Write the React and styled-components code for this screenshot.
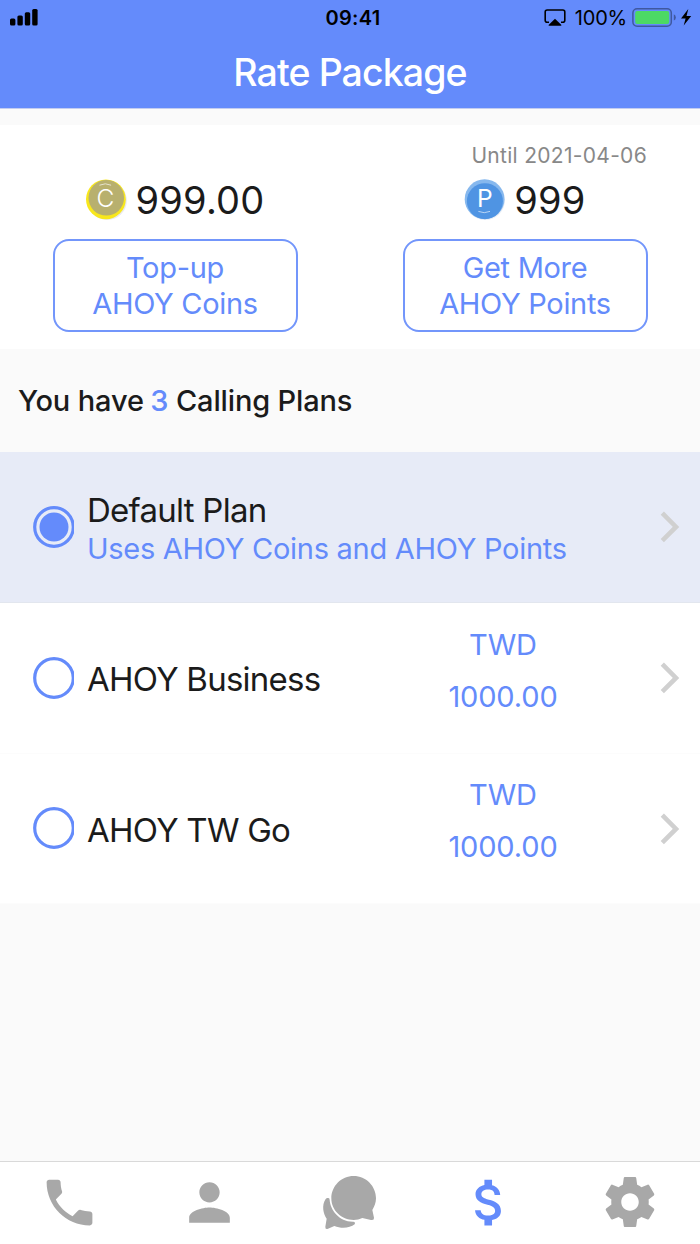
import styled, { createGlobalStyle } from 'styled-components';
import { useState } from 'react';
import { MdPhone, MdPerson, MdAttachMoney } from 'react-icons/md';

const BLUE = '#648bfb';

const GlobalStyle = createGlobalStyle`
  * {
    box-sizing: border-box;
  }
  body {
    margin: 0;
    background: #fafafa;
    color: #1b1b1b;
    font-family: Inter, "Liberation Sans", sans-serif;
  }
  button {
    font-family: inherit;
    margin: 0;
    padding: 0;
    border: 0;
    background: none;
    cursor: pointer;
  }
  svg {
    display: block;
    flex: none;
  }
`;

const Screen = styled.div`
  display: flex;
  flex-direction: column;
  width: 700px;
  height: 1244px;
`;

const Header = styled.header`
  height: 109px;
  background: ${BLUE};
  border-bottom: 1px solid #c3cdf0;
  flex: none;
`;

const StatusBar = styled.div`
  display: grid;
  grid-template-columns: 1fr auto 1fr;
  align-items: center;
  height: 36px;
  padding: 0 8px 0 10px;
  color: #000;
  font-size: 20px;
`;

const Clock = styled.div`
  font-weight: 600;
  letter-spacing: 0.3px;
  padding-left: 4px;
`;

const StatusRight = styled.div`
  display: flex;
  align-items: center;
  justify-content: flex-end;
`;

const Percent = styled.span`
  margin: 0 5px 0 9px;
  letter-spacing: -0.2px;
`;

const Title = styled.h1`
  margin: 0;
  text-align: center;
  color: #fff;
  font-size: 37.5px;
  font-weight: 500;
  line-height: 74px;
  letter-spacing: -0.9px;
`;

const Balances = styled.section`
  display: grid;
  grid-template-columns: 1fr 1fr;
  height: 224px;
  margin-top: 16px;
  padding-top: 18px;
  background: #fff;
  flex: none;
`;

const Balance = styled.div`
  display: flex;
  flex-direction: column;
  align-items: center;
`;

const Until = styled.div`
  align-self: flex-end;
  height: 26px;
  margin-right: 53px;
  color: #888;
  font-size: 21px;
  line-height: 26px;
  letter-spacing: 0.3px;
`;

const Amount = styled.div`
  display: flex;
  align-items: center;
  height: 61px;
  gap: 8px;
  font-size: 38px;
  letter-spacing: 0.2px;
`;

const OutlineButton = styled.button`
  width: 245px;
  height: 93px;
  margin-top: 9px;
  padding-top: 1px;
  border: 2px solid #7396fb;
  border-radius: 16px;
  color: ${BLUE};
  font-size: 29px;
  line-height: 36px;
  letter-spacing: -0.3px;
`;

const PlansHeading = styled.h2`
  margin: 0;
  padding-left: 18px;
  height: 103px;
  font-size: 29px;
  font-weight: 500;
  line-height: 104px;
  letter-spacing: -0.15px;
  flex: none;
  span {
    color: ${BLUE};
    margin-left: -1px;
  }
`;

const Plan = styled.div`
  display: flex;
  align-items: center;
  height: 150.8px;
  padding: 0 1px 0 33px;
  border-bottom: 1px solid ${({ $active }) => ($active ? '#e2e6ee' : '#fcfcfc')};
  background: ${({ $active }) => ($active ? '#e7ebf7' : '#fff')};
  cursor: pointer;
  flex: none;
`;

const PlanText = styled.div`
  flex: 1;
  margin-left: 13px;
  padding-top: 3px;
  white-space: nowrap;
`;

const PlanName = styled.div`
  font-size: 33px;
  line-height: 38px;
  letter-spacing: -0.75px;
`;

const PlanNote = styled.div`
  padding-top: 1px;
  margin-bottom: -3px;
  color: ${BLUE};
  font-size: 29px;
  line-height: 38px;
  letter-spacing: -0.28px;
`;

const Price = styled.div`
  width: 200px;
  margin-right: 37px;
  padding-bottom: 14px;
  text-align: center;
  color: ${BLUE};
  font-size: 29px;
  line-height: 52px;
  letter-spacing: -0.15px;
`;

const TabBar = styled.nav`
  display: grid;
  grid-template-columns: repeat(5, 1fr);
  height: 83px;
  margin-top: auto;
  border-top: 1px solid #d9d9d9;
  background: #fff;
`;

const Tab = styled.button`
  display: flex;
  align-items: center;
  justify-content: center;
  padding: 0 1px 2px 0;
  color: ${({ $active }) => ($active ? BLUE : '#a8a8a8')};
`;

const plans = [
  { id: 'default', name: 'Default Plan', note: 'Uses AHOY Coins and AHOY Points' },
  { id: 'business', name: 'AHOY Business', price: '1000.00' },
  { id: 'twgo', name: 'AHOY TW Go', price: '1000.00' },
];

const tabs = [
  { id: 'call', icon: <MdPhone size={61} /> },
  { id: 'contacts', icon: <MdPerson size={61} /> },
  { id: 'chat', icon: <ChatIcon /> },
  { id: 'rates', icon: <MdAttachMoney size={61} /> },
  { id: 'settings', icon: <GearIcon /> },
];

function App() {
  const [plan, setPlan] = useState('default');
  const [tab, setTab] = useState('rates');
  return (
    <Screen>
      <GlobalStyle />
      <Header>
        <StatusBar>
          <SignalIcon />
          <Clock>09:41</Clock>
          <StatusRight>
            <AirplayIcon />
            <Percent>100%</Percent>
            <BatteryIcon />
          </StatusRight>
        </StatusBar>
        <Title>Rate Package</Title>
      </Header>
      <Balances>
        <Balance>
          <Until />
          <Amount>
            <CoinIcon />
            999.00
          </Amount>
          <OutlineButton type="button">Top-up<br />AHOY Coins</OutlineButton>
        </Balance>
        <Balance>
          <Until>Until 2021-04-06</Until>
          <Amount>
            <PointIcon />
            999
          </Amount>
          <OutlineButton type="button">Get More<br />AHOY Points</OutlineButton>
        </Balance>
      </Balances>
      <PlansHeading>You have <span>{plans.length}</span> Calling Plans</PlansHeading>
      {plans.map(p => (
        <Plan key={p.id} $active={p.id === plan} onClick={() => setPlan(p.id)}>
          <Radio checked={p.id === plan} />
          <PlanText>
            <PlanName>{p.name}</PlanName>
            {p.note && <PlanNote>{p.note}</PlanNote>}
          </PlanText>
          {p.price && <Price>TWD<br />{p.price}</Price>}
          <Chevron />
        </Plan>
      ))}
      <TabBar>
        {tabs.map(t => (
          <Tab key={t.id} type="button" $active={t.id === tab} onClick={() => setTab(t.id)}>
            {t.icon}
          </Tab>
        ))}
      </TabBar>
    </Screen>
  );
}

export default App;

function Radio({ checked }) {
  return (
    <svg width="41" height="42" viewBox="0 0 41 42">
      <circle cx="21" cy="21" r="19.3" fill="none" stroke={BLUE} strokeWidth="3.2" />
      {checked && <circle cx="21" cy="21" r="14.5" fill={BLUE} />}
    </svg>
  );
}

function Chevron() {
  return (
    <svg width="59" height="59" viewBox="0 0 59 59">
      <path d="M22.3 16.2L36 29.9L22.3 43.6" fill="none" stroke="#d0d0d0" strokeWidth="4.6" />
    </svg>
  );
}

function SignalIcon() {
  return (
    <svg width="28" height="18" viewBox="0 0 28 18">
      <rect x="0" y="9.6" width="5.4" height="7" rx="1.5" />
      <rect x="7.4" y="6.4" width="5.4" height="10.2" rx="1.5" />
      <rect x="14.8" y="3.2" width="5.4" height="13.4" rx="1.5" />
      <rect x="22.2" y="0" width="5.4" height="16.6" rx="1.5" />
    </svg>
  );
}

function AirplayIcon() {
  return (
    <svg width="22" height="18" viewBox="0 0 22 18">
      <path d="M5 13.2H3.2Q1.2 13.2 1.2 11.2V3Q1.2 1 3.2 1H18.8Q20.8 1 20.8 3V11.2Q20.8 13.2 18.8 13.2H17" fill="none" stroke="#000" strokeWidth="1.6" />
      <path d="M11 9.8L17.2 15.8Q17.8 16.7 17 16.7H5Q4.2 16.7 4.8 15.8Z" />
    </svg>
  );
}

function BatteryIcon() {
  return (
    <svg width="60" height="20" viewBox="0 0 60 20">
      <rect x="0.9" y="0.8" width="38.4" height="17.4" rx="4.2" fill="none" stroke="#3f589f" strokeWidth="1.5" />
      <rect x="3.2" y="3" width="34" height="13" rx="2" fill="#4cd964" />
      <path d="M41.8 6.2Q43.8 7 43.8 9.4T41.8 12.6Z" fill="#3f589f" />
      <path d="M56.3 1.1L49 10.4H53.6L51.7 17.4L59.2 7.9H54.5Z" />
    </svg>
  );
}

function CoinIcon() {
  return (
    <svg width="42" height="42" viewBox="0 0 42 42">
      <circle cx="21.2" cy="21.5" r="19.6" fill="#e9e9ee" />
      <circle cx="19.9" cy="20.3" r="19.9" fill="#f8e71c" />
      <circle cx="20.3" cy="18.8" r="17.8" fill="#b8b06e" />
      <path d="M13.5 6.2Q19.3 3.4 25.1 6.2" fill="none" stroke="#e6e3cd" strokeWidth="1" />
      <text x="19.4" y="28.2" textAnchor="middle" fontSize="24.5" fontWeight="350" fill="#fff">C</text>
    </svg>
  );
}

function PointIcon() {
  return (
    <svg width="42" height="42" viewBox="0 0 42 42">
      <circle cx="21.2" cy="21.2" r="19.8" fill="#e8eef6" />
      <circle cx="20.6" cy="20.2" r="19.9" fill="#86b8ee" />
      <circle cx="20.9" cy="22.2" r="18" fill="#4f94e3" />
      <path d="M14.4 32.4Q20.2 35 26 32.4" fill="none" stroke="#b9d5f5" strokeWidth="1" />
      <text x="21" y="28" textAnchor="middle" fontSize="24.5" fill="#fff">P</text>
    </svg>
  );
}

function ChatIcon() {
  return (
    <svg width="60" height="60" viewBox="60 66 180 180" fill="currentColor">
      <path d="M161 78C198 78 228 108 228 145C228 158 223 170 217 180L222 203Q223 212 213 210L187 204C179 208 170 210 161 210C124 210 94 181 94 145C94 108 124 78 161 78Z" />
      <path d="M84 144Q89 143 89 150C91 180 118 216 160 215Q167 216 164 223C150 234 125 237 103 228L84 236Q75 239 76 230L80 206C70 192 64 166 77 147Q80 143 84 144Z" />
    </svg>
  );
}

function GearIcon() {
  return (
    <svg width="60" height="60" viewBox="0 0 24 24" fill="currentColor">
      <path d="M19.43 12.98c.04-.32.07-.64.07-.98s-.03-.66-.07-.98l2.11-1.65c.19-.15.24-.42.12-.64l-2-3.46c-.12-.22-.39-.3-.61-.22l-2.49 1c-.52-.4-1.08-.73-1.69-.98l-.38-2.65C14.46 2.18 14.25 2 14 2h-4c-.25 0-.46.18-.49.42l-.38 2.65c-.61.25-1.17.59-1.69.98l-2.49-1c-.23-.09-.49 0-.61.22l-2 3.46c-.13.22-.07.49.12.64l2.11 1.65c-.04.32-.07.65-.07.98s.03.66.07.98l-2.11 1.65c-.19.15-.24.42-.12.64l2 3.46c.12.22.39.3.61.22l2.49-1c.52.4 1.08.73 1.69.98l.38 2.65c.03.24.24.42.49.42h4c.25 0 .46-.18.49-.42l.38-2.65c.61-.25 1.17-.59 1.69-.98l2.49 1c.23.09.49 0 .61-.22l2-3.46c.12-.22.07-.49-.12-.64l-2.11-1.65zM12 15.5c-1.93 0-3.5-1.57-3.5-3.5s1.57-3.5 3.5-3.5 3.5 1.57 3.5 3.5-1.57 3.5-3.5 3.5z" />
    </svg>
  );
}
